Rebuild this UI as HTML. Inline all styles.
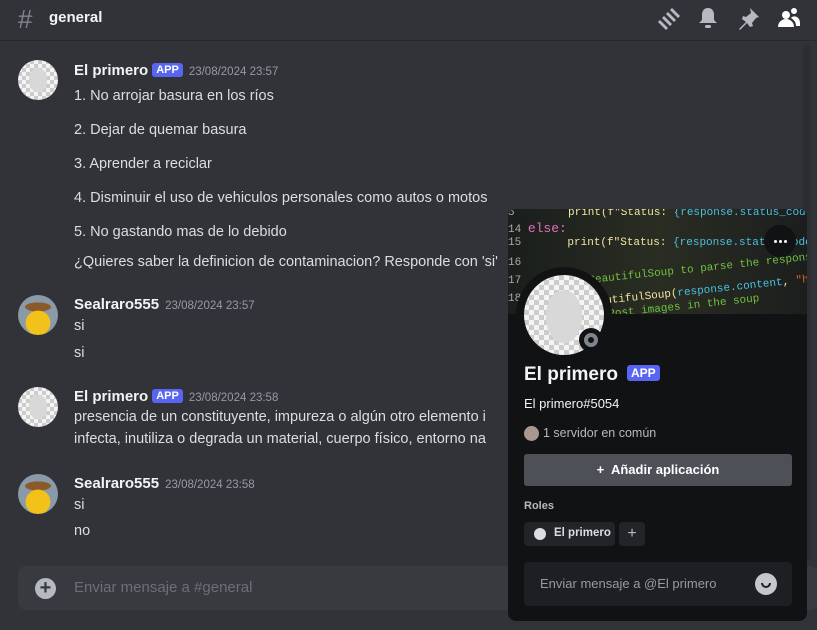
<!DOCTYPE html>
<html><head><meta charset="utf-8"><style>
*{margin:0;padding:0;box-sizing:border-box}
body{width:817px;height:630px;overflow:hidden;background:#313338;font-family:"Liberation Sans",sans-serif;color:#dbdee1;position:relative}
.hdr{position:absolute;left:0;top:0;width:817px;height:41px;border-bottom:1px solid #26282c;background:#313338}
.hdr .hash{position:absolute;left:18px;top:4px;font-size:26px;color:#80848e}
.hdr .t{position:absolute;left:49px;top:9px;font-size:15px;font-weight:bold;color:#f2f3f5}
.av{position:absolute;left:18px;width:40px;height:40px;border-radius:50%;overflow:hidden;background:#ddd}
.mask{background:radial-gradient(ellipse 11px 15px at 50% 50%,#d8d8d8 80%,transparent 85%),repeating-conic-gradient(#ccc 0 25%,#f4f4f4 0 50%) 0 0/8px 8px}
.duck{background:radial-gradient(circle at 50% 70%,#f2c21b 35%,transparent 37%),radial-gradient(ellipse 14px 5px at 50% 30%,#8b5a2b 90%,transparent 95%),#8a9aa8}
.n{position:absolute;left:74px;font-size:15px;font-weight:bold;color:#f2f3f5}
.app{display:inline-block;background:#5865f2;color:#fff;font-size:11px;font-weight:bold;padding:1px 4px;border-radius:3px;margin-left:4px;vertical-align:2px}
.ts{font-size:11.5px;color:#949ba4;font-weight:normal;margin-left:6px}
.m{position:absolute;left:74px;font-size:14.5px;color:#dbdee1;white-space:nowrap}
.inp{position:absolute;left:18px;top:566px;width:800px;height:44px;background:#383a40;border-radius:8px}
.pop{position:absolute;left:508px;top:209px;width:299px;height:412px;background:#111214;border-radius:8px;overflow:hidden}
.ban{position:absolute;left:0;top:0;width:299px;height:105px;background:linear-gradient(90deg,#1a1e1c,#2a2d22 50%,#1c1e1e);overflow:hidden;font-family:"Liberation Mono",monospace;font-size:11px;white-space:nowrap}
</style></head><body>
<div class="hdr"><span class="hash">#</span><span class="t">general</span>
<svg style="position:absolute;left:655px;top:7px" width="26" height="24" viewBox="0 0 26 24"><g stroke="#b5bac1" stroke-width="3"><line x1="4" y1="14" x2="12" y2="22"/><line x1="8" y1="10" x2="16" y2="18"/><line x1="12" y1="6" x2="20" y2="14"/><line x1="16" y1="2" x2="24" y2="10"/></g></svg>
<svg style="position:absolute;left:697px;top:6px" width="22" height="24" viewBox="0 0 22 24"><path d="M11 2c4 0 6 3 6 7v5l3 3H2l3-3V9c0-4 2-7 6-7z" fill="#b5bac1"/><rect x="8" y="19" width="6" height="3" rx="1.5" fill="#b5bac1"/></svg>
<svg style="position:absolute;left:737px;top:6px" width="24" height="24" viewBox="0 0 24 24"><path d="M13 2l9 9-3 1-4 5 1 3-3 1-3-4-7 7-1-1 7-7-4-3 1-3 3 1 5-4z" fill="#b5bac1"/></svg>
<svg style="position:absolute;left:777px;top:6px" width="24" height="24" viewBox="0 0 24 24"><circle cx="9" cy="9" r="4" fill="#fff"/><path d="M1 21c0-5 4-8 8-8s8 3 8 8z" fill="#fff"/><circle cx="17" cy="5" r="3" fill="#fff"/><path d="M14 12c2-3 9-2 9 5v3h-4c0-4-2-6-5-8z" fill="#fff"/></svg>
</div>
<div style="position:absolute;left:803px;top:45px;width:8px;height:515px;background:#2b2d31;border-radius:4px"></div>

<div class="av mask" style="top:60px"></div>
<div class="n" style="top:62px">El primero<span class="app">APP</span><span class="ts">23/08/2024 23:57</span></div>
<div class="m" style="top:88px">1. No arrojar basura en los ríos</div>
<div class="m" style="top:122px">2. Dejar de quemar basura</div>
<div class="m" style="top:156px">3. Aprender a reciclar</div>
<div class="m" style="top:190px">4. Disminuir el uso de vehiculos personales como autos o motos</div>
<div class="m" style="top:224px">5. No gastando mas de lo debido</div>
<div class="m" style="top:254px">¿Quieres saber la definicion de contaminacion? Responde con 'si'</div>

<div class="av duck" style="top:295px"></div>
<div class="n" style="top:296px">Sealraro555<span class="ts">23/08/2024 23:57</span></div>
<div class="m" style="top:318px">si</div>
<div class="m" style="top:345px">si</div>

<div class="av mask" style="top:387px"></div>
<div class="n" style="top:388px">El primero<span class="app">APP</span><span class="ts">23/08/2024 23:58</span></div>
<div class="m" style="top:409px">presencia de un constituyente, impureza o algún otro elemento i</div>
<div class="m" style="top:431px">infecta, inutiliza o degrada un material, cuerpo físico, entorno na</div>

<div class="av duck" style="top:474px"></div>
<div class="n" style="top:475px">Sealraro555<span class="ts">23/08/2024 23:58</span></div>
<div class="m" style="top:497px">si</div>
<div class="m" style="top:523px">no</div>

<div class="inp"><div style="position:absolute;left:17px;top:12px;width:21px;height:21px;border-radius:50%;background:#b5bac1;color:#383a40;font-size:20px;line-height:20px;text-align:center;font-weight:bold">+</div><div style="position:absolute;left:56px;top:13px;font-size:15px;color:#6d6f78">Enviar mensaje a #general</div></div>

<div class="pop">
<div class="ban">
<div style="position:absolute;left:0;top:-2px;color:#aaa">5</div>
<div style="position:absolute;left:60px;top:-2px;color:#f0e6a0">print(f"Status: <span style="color:#4ac0e0">{response.status_code}</span> <span style="color:#e06030">- Try renaming</span></div>
<div style="position:absolute;left:0;top:12px;color:#aaa">14 <span style="color:#e070c0;font-size:13px">else:</span></div>
<div style="position:absolute;left:0;top:28px;color:#aaa">15 &nbsp;&nbsp;&nbsp;&nbsp;&nbsp;&nbsp;<span style="color:#f0e6a0">print(f"Status: <span style="color:#4ac0e0">{response.status_code}\n</span>")</span></div>
<div style="position:absolute;left:0;top:48px;color:#aaa">16</div>
<div style="position:absolute;left:80px;top:54px;color:#70c040;transform:rotate(-6deg)">BeautifulSoup to parse the response</div>
<div style="position:absolute;left:0;top:66px;color:#aaa">17</div>
<div style="position:absolute;left:90px;top:72px;color:#f0e6a0;transform:rotate(-6deg)">autifulSoup(<span style="color:#4ac0e0">response.content</span>, <span style="color:#e06030">"html.parser"</span>)</div>
<div style="position:absolute;left:0;top:84px;color:#aaa">18</div>
<div style="position:absolute;left:100px;top:92px;color:#70c040;transform:rotate(-6deg)">Post images in the soup</div>
<div style="position:absolute;left:256px;top:16px;width:32px;height:32px;border-radius:50%;background:#111214"><div style="position:absolute;left:10px;top:15px;width:3px;height:3px;background:#fff;border-radius:50%;box-shadow:5px 0 #fff,10px 0 #fff"></div></div>
</div>
<div style="position:absolute;left:8px;top:58px;width:96px;height:96px;border-radius:50%;background:#111214"></div>
<div style="position:absolute;left:16px;top:66px;width:80px;height:80px;border-radius:50%;background:radial-gradient(ellipse 22px 32px at 50% 52%,#d8d8d8 80%,transparent 85%),repeating-conic-gradient(#ccc 0 25%,#f4f4f4 0 50%) 0 0/10px 10px"></div>
<div style="position:absolute;left:71px;top:119px;width:24px;height:24px;border-radius:50%;background:#111214"></div>
<div style="position:absolute;left:76px;top:124px;width:14px;height:14px;border-radius:50%;border:4px solid #80848e"></div>
<div style="position:absolute;left:16px;top:155px;font-size:19px;font-weight:bold;color:#f2f3f5">El primero<span class="app" style="font-size:12px;margin-left:9px;vertical-align:3px">APP</span></div>
<div style="position:absolute;left:16px;top:187px;font-size:13px;color:#f2f3f5">El primero#5054</div>
<div style="position:absolute;left:16px;top:217px;width:15px;height:15px;border-radius:50%;background:#a89890"></div>
<div style="position:absolute;left:35px;top:217px;font-size:12.5px;color:#b5bac1">1 servidor en común</div>
<div style="position:absolute;left:16px;top:245px;width:268px;height:32px;background:#4e5058;border-radius:3px;color:#fff;font-size:13px;font-weight:bold;text-align:center;line-height:32px">+&nbsp; Añadir aplicación</div>
<div style="position:absolute;left:16px;top:291px;font-size:11px;font-weight:bold;color:#b5bac1">Roles</div>
<div style="position:absolute;left:16px;top:313px;width:91px;height:24px;background:#232428;border-radius:4px"><div style="position:absolute;left:10px;top:6px;width:12px;height:12px;border-radius:50%;background:#dbdee1"></div><div style="position:absolute;left:30px;top:5px;font-size:11.5px;font-weight:bold;color:#dbdee1">El primero</div></div>
<div style="position:absolute;left:111px;top:313px;width:26px;height:24px;background:#232428;border-radius:4px;color:#b5bac1;text-align:center;line-height:24px;font-size:16px">+</div>
<div style="position:absolute;left:16px;top:353px;width:268px;height:44px;background:#1e1f22;border-radius:4px"><div style="position:absolute;left:16px;top:14px;font-size:13px;color:#949ba4">Enviar mensaje a @El primero</div><div style="position:absolute;left:231px;top:11px;width:22px;height:22px;border-radius:50%;background:#c4c7cc"><div style="position:absolute;left:6px;top:10px;width:10px;height:5px;border:2px solid #1e1f22;border-top:none;border-radius:0 0 6px 6px"></div></div></div>
</div>
</body></html>
